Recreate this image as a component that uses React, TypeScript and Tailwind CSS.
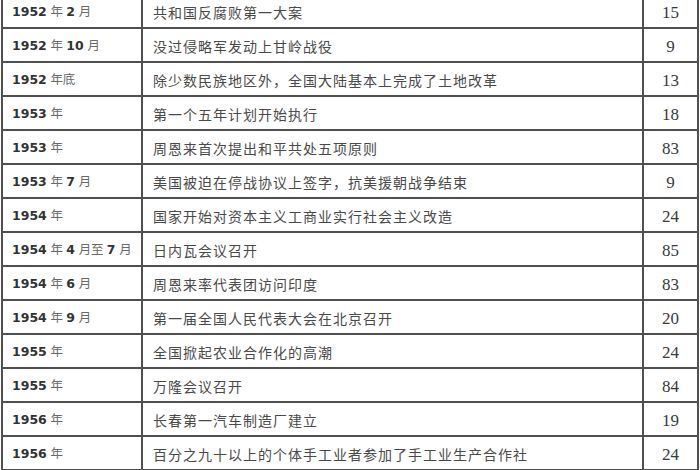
import React from "react";

const rows: [string, string, string][] = [
  ["1952 年 2 月", "共和国反腐败第一大案", "15"],
  ["1952 年 10 月", "没过侵略军发动上甘岭战役", "9"],
  ["1952 年底", "除少数民族地区外，全国大陆基本上完成了土地改革", "13"],
  ["1953 年", "第一个五年计划开始执行", "18"],
  ["1953 年", "周恩来首次提出和平共处五项原则", "83"],
  ["1953 年 7 月", "美国被迫在停战协议上签字，抗美援朝战争结束", "9"],
  ["1954 年", "国家开始对资本主义工商业实行社会主义改造", "24"],
  ["1954 年 4 月至 7 月", "日内瓦会议召开", "85"],
  ["1954 年 6 月", "周恩来率代表团访问印度", "83"],
  ["1954 年 9 月", "第一届全国人民代表大会在北京召开", "20"],
  ["1955 年", "全国掀起农业合作化的高潮", "24"],
  ["1955 年", "万隆会议召开", "84"],
  ["1956 年", "长春第一汽车制造厂建立", "19"],
  ["1956 年", "百分之九十以上的个体手工业者参加了手工业生产合作社", "24"],
];

function DateText({ text }: { text: string }) {
  const parts = text.split(/(\d+)/).filter((p) => p.length > 0);
  return (
    <span className="whitespace-pre">
      {parts.map((p, i) =>
        /^\d+$/.test(p) ? (
          <span key={i} className="font-semibold text-[#333] text-[12.5px]">
            {p}
          </span>
        ) : (
          <span key={i} className="text-[#6a6a6a] text-[12.5px] tracking-[-0.3px]">
            {p}
          </span>
        )
      )}
    </span>
  );
}

export default function App() {
  return (
    <div className="w-[700px] h-[470px] overflow-hidden bg-white">
      <div className="mt-[-5px] ml-[1px] w-[698px] border-l-2 border-r-2 border-[#505050]">
        {rows.map((r, i) => (
          <div
            key={i}
            className="flex h-[34px] border-b-2 border-[#505050] items-center"
          >
            <div
              className="w-[138px] h-full flex items-center pl-[9px] pt-[3px] text-[12.5px] whitespace-nowrap"
              style={{ fontFamily: '"DejaVu Sans", "Noto Sans CJK SC", sans-serif' }}
            >
              <DateText text={r[0]} />
            </div>
            <div
              className="w-[501px] h-full flex items-center pl-[10px] pt-[3px] border-l-2 border-[#505050] text-[14px] tracking-[1px] text-[#4a4a4a] whitespace-nowrap"
              style={{ fontFamily: '"Noto Sans CJK SC", sans-serif' }}
            >
              {r[1]}
            </div>
            <div
              className="flex-1 h-full flex items-center justify-center pt-[3px] border-l-2 border-[#505050] text-[17px] text-[#3a3a3a]"
              style={{ fontFamily: '"Liberation Serif", serif' }}
            >
              {r[2]}
            </div>
          </div>
        ))}
      </div>
    </div>
  );
}
